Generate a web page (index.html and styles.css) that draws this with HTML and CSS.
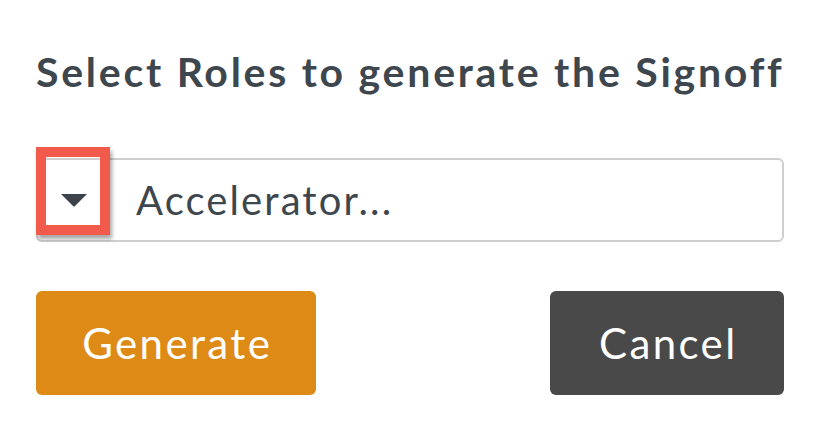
FILE: index.html
```html
<!DOCTYPE html>
<html lang="en">
<head>
  <meta charset="UTF-8" />
  <title>Signoff</title>
  <link rel="stylesheet" href="styles.css">
</head>
<body>
  <div class="dialog">
    <h2 class="title">Select Roles to generate the Signoff</h2>

    <div class="role-select">
      <div class="toggle">
        <svg width="28" height="14" viewBox="0 0 28 14"><path d="M1 1 H27 L15 13 Q14 14 13 13 Z" fill="#3c434a"/></svg>
        <span class="highlight"></span>
      </div>
      <div class="value">Accelerator...</div>
    </div>

    <div class="actions">
      <button class="btn btn-generate">Generate</button>
      <button class="btn btn-cancel">Cancel</button>
    </div>
  </div>
</body>
</html>
```

FILE: styles.css
```css
body {
  margin: 0;
  background: #fff;
  font-family: Lato, 'Liberation Sans', Arial, sans-serif;
  color: #3e464e;
}
.dialog {
  width: 748px;
  padding: 44px 0 0 36px;
}
.title {
  margin: 0;
  font-size: 41px;
  font-weight: bold;
  line-height: 56px;
  letter-spacing: 2.75px;
  white-space: nowrap;
  color: #3e464e;
}
.role-select {
  display: flex;
  height: 84px;
  margin-top: 58px;
  border: 2px solid #cfcfcd;
  border-radius: 6px;
  box-sizing: border-box;
}
.toggle {
  position: relative;
  width: 72px;
  display: flex;
  align-items: center;
  justify-content: center;
}
.highlight {
  position: absolute;
  left: -2px;
  top: -13px;
  width: 54px;
  height: 68px;
  border: 10px solid #f25b4c;
  box-shadow: 2px 4px 4px rgba(0, 0, 0, 0.35);
}
.value {
  display: flex;
  align-items: center;
  padding-left: 26px;
  font-size: 40px;
  letter-spacing: 2.1px;
  color: #3e464e;
}
.actions {
  display: flex;
  justify-content: space-between;
  margin-top: 49px;
}
.btn {
  height: 104px;
  border: none;
  border-radius: 6px;
  color: #fff;
  font-family: Lato, 'Liberation Sans', Arial, sans-serif;
  font-size: 42px;
  letter-spacing: 2.4px;
  text-indent: 2.4px;
}
.btn-generate {
  width: 280px;
  background: #de8a16;
}
.btn-cancel {
  width: 234px;
  background: #494949;
}
```
